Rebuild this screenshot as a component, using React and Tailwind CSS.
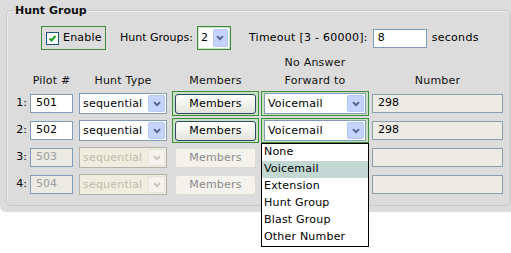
import React from 'react';

const Chevron = ({ color }) => (
  <svg width="8" height="6" viewBox="0 0 8 6">
    <path d="M1 1.2 L4 4.2 L7 1.2" fill="none" stroke={color} strokeWidth="1.8" />
  </svg>
);

function Select({ value, width, disabled }) {
  return (
    <div
      className={`flex items-center h-[21px] border ${disabled ? 'border-[#b3b2aa] bg-[#efedde] text-[#c0bca8]' : 'border-[#7f9db9] bg-white text-black'}`}
      style={{ width }}
    >
      <span className="flex-1 pl-[3px] leading-none truncate tracking-[0.2px]">{value}</span>
      <div className={`w-[17px] h-[17px] mr-px flex items-center justify-center rounded-[2px] ${disabled ? 'bg-[#f4f3ee] border border-[#e6e4da]' : 'bg-[#c4d4fb] border border-[#b4c8f6]'}`}>
        <Chevron color={disabled ? '#c5c3ba' : '#4d6185'} />
      </div>
    </div>
  );
}

function GreenBox({ children, width }) {
  return (
    <div className="h-[25px] border border-[#3e8b3e] bg-[#c9e2c2] p-[2px] flex items-center" style={{ width }}>
      {children}
    </div>
  );
}

const rows = [
  { n: 1, pilot: '501', number: '298', on: true },
  { n: 2, pilot: '502', number: '298', on: true },
  { n: 3, pilot: '503', number: '', on: false },
  { n: 4, pilot: '504', number: '', on: false },
];

const options = ['None', 'Voicemail', 'Extension', 'Hunt Group', 'Blast Group', 'Other Number'];

export default function App() {
  return (
    <div className="relative w-[511px] h-[253px] bg-white text-[11px] text-black font-['DejaVu_Sans',sans-serif]">
      <div className="bg-[#dcdcdc] h-[212px] pt-[4px] pl-[6px] rounded-bl-[6px]">
        <fieldset className="border border-[#c5c5c5] rounded-[5px] h-[202px] m-0 p-0 shadow-[inset_1px_1px_0_#ececec]">
          <legend className="ml-[7px] px-px font-bold leading-[13px] text-[#111]">Hunt Group</legend>

          <div className="flex items-center h-[24px] mt-[9px]">
            <div className="ml-[34px] w-[65px] h-[24px] border border-[#3e8b3e] flex items-center">
              <div className="ml-[4px] w-[13px] h-[13px] border border-[#1c5180] bg-white flex items-center justify-center">
                <svg width="9" height="9" viewBox="0 0 9 9">
                  <path d="M1.5 4.5 L3.5 6.5 L7.5 2" fill="none" stroke="#21a121" strokeWidth="2" />
                </svg>
              </div>
              <span className="ml-[4px] tracking-[0.2px]">Enable</span>
            </div>
            <span className="ml-[14px]">Hunt Groups:</span>
            <div className="ml-[4px] w-[34px] h-[24px] border border-[#3e8b3e] bg-[#c9e2c2] p-px">
              <div className="h-full bg-white flex items-center">
                <span className="flex-1 pl-[2px]">2</span>
                <div className="w-[15px] h-[18px] mr-px bg-[#c4d4fb] border border-[#b4c8f6] rounded-[2px] flex items-center justify-center">
                  <Chevron color="#4d6185" />
                </div>
              </div>
            </div>
            <span className="ml-[18px] tracking-[0.25px]">Timeout [3 - 60000]:</span>
            <div className="ml-[5px] w-[54px] h-[19px] border border-[#7f9db9] bg-white pl-[4px] flex items-center">8</div>
            <span className="ml-[5px] tracking-[0.3px]">seconds</span>
          </div>

          <div className="mt-[4px] h-[36px] flex text-[#111] tracking-[0.2px]">
            <div className="w-[23px]" />
            <div className="w-[43px] flex items-end justify-center leading-[18px]">Pilot #</div>
            <div className="w-[6px]" />
            <div className="w-[88px] flex items-end justify-center leading-[18px]">Hunt Type</div>
            <div className="w-[5px]" />
            <div className="w-[87px] flex items-end justify-center leading-[18px]">Members</div>
            <div className="w-[2px]" />
            <div className="w-[108px] flex flex-col items-center leading-[18px]">
              <span>No Answer</span>
              <span>Forward to</span>
            </div>
            <div className="w-[3px]" />
            <div className="w-[131px] flex items-end justify-center leading-[18px]">Number</div>
          </div>

          <div className="mt-px flex flex-col gap-[2px]">
            {rows.map(r => (
              <div key={r.n} className="flex items-center h-[25px]">
                <div className="w-[23px] text-right pr-[3px]">{r.n}:</div>
                <div className={`w-[43px] h-[19px] border border-[#7f9db9] pl-[5px] flex items-center ${r.on ? 'bg-white' : 'bg-[#ebebe4] text-[#9e9e9e]'}`}>{r.pilot}</div>
                <div className="w-[6px]" />
                <Select value="sequential" width={88} disabled={!r.on} />
                <div className="w-[5px]" />
                {r.on ? (
                  <GreenBox width={87}>
                    <button className="w-full h-[20px] border border-[#2c4a66] rounded-[3px] bg-gradient-to-b from-white to-[#e4e4dc] text-black leading-none tracking-[0.2px]">Members</button>
                  </GreenBox>
                ) : (
                  <div className="w-[87px] flex justify-center">
                    <button className="w-[81px] h-[20px] border border-[#dedcd2] rounded-[3px] bg-[#f3f2ec] text-[#8a8a8a] leading-none tracking-[0.2px]">Members</button>
                  </div>
                )}
                <div className="w-[2px]" />
                {r.on ? (
                  <GreenBox width={108}>
                    <Select value="Voicemail" width={102} />
                  </GreenBox>
                ) : (
                  <div className="w-[108px]" />
                )}
                <div className="w-[3px]" />
                <div className="w-[131px] h-[19px] border border-[#8d9cab] bg-[#ecebe5] pl-[5px] flex items-center">{r.number}</div>
              </div>
            ))}
          </div>
        </fieldset>
      </div>

      <div className="absolute left-[261px] top-[143px] w-[108px] border border-black bg-white tracking-[0.2px]">
        {options.map(o => (
          <div key={o} className={`h-[17px] pl-[2px] flex items-center ${o === 'Voicemail' ? 'bg-[#c3d7d3]' : ''}`}>{o}</div>
        ))}
      </div>
    </div>
  );
}
